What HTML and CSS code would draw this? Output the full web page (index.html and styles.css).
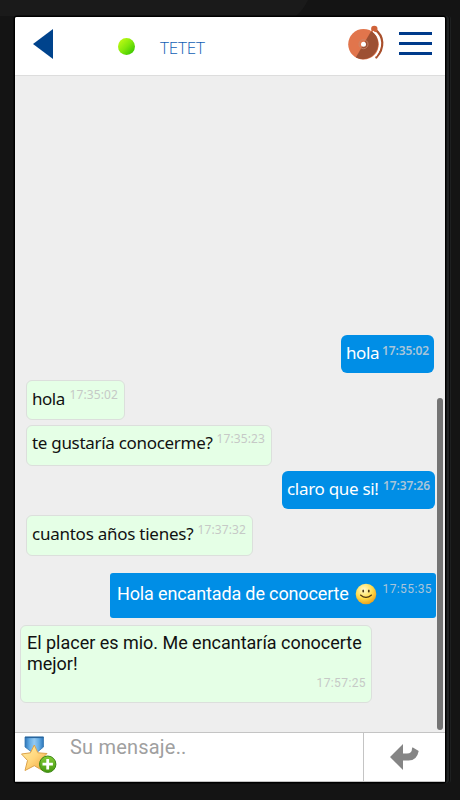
FILE: index.html
```
<!DOCTYPE html>
<html lang="es">
<head>
<meta charset="utf-8">
<title>TETET</title>
<link rel="stylesheet" href="styles.css">
</head>
<body>
<div class="phone">
  <svg class="glare" width="308" height="16" viewBox="0 0 308 16"><path d="M0 0H308Q304 9 296 16H0Z" fill="#1a1a1a"/></svg>
  <main class="screen">
    <header class="topbar">
      <svg class="back" width="20" height="30" viewBox="0 0 20 30"><path d="M0 15 20 0V30Z" fill="#00438c"/></svg>
      <span class="status"></span>
      <h1 class="name">TETET</h1>
      <svg class="bell" width="36" height="36" viewBox="0 0 36 36">
        <path d="M27 4.5C36 11 37 23 28.3 32.5" fill="none" stroke="#a94f2b" stroke-width="2.2" stroke-linecap="round"/>
        <circle cx="26.3" cy="4" r="3.2" fill="#cf6239"/>
        <circle cx="15.5" cy="19.2" r="15.3" fill="#e1754c"/>
        <path d="M23.2 6A15.3 15.3 0 0 1 7.8 32.4Z" fill="#9d5033"/>
        <path d="M25 6.2C33.2 12 33.7 23 27.7 31" fill="none" stroke="#fff" stroke-width="1.3"/>
        <circle cx="15.5" cy="19.2" r="4.5" fill="none" stroke="#c9896e" stroke-width=".8"/>
        <circle cx="15.5" cy="19.2" r="2.5" fill="#fff"/>
      </svg>
      <div class="menu"><i></i><i></i><i></i></div>
    </header>
    <section class="chat">
      <div class="msg out m1"><span class="text">hola</span><time>17:35:02</time></div>
      <div class="msg in m2"><span class="text">hola</span><time>17:35:02</time></div>
      <div class="msg in m3"><span class="text">te gustaría conocerme?</span><time>17:35:23</time></div>
      <div class="msg out m4"><span class="text">claro que si!</span><time>17:37:26</time></div>
      <div class="msg in m5"><span class="text">cuantos años tienes?</span><time>17:37:32</time></div>
      <div class="msg out mobile m6"><span class="text">Hola encantada de conocerte</span>
        <svg class="smile" width="22" height="22" viewBox="0 0 22 22">
          <defs><radialGradient id="face" cx=".4" cy=".3" r=".75"><stop offset="0" stop-color="#fffbd0"/><stop offset=".55" stop-color="#ffdc4b"/><stop offset="1" stop-color="#e99a16"/></radialGradient></defs>
          <circle cx="11" cy="11" r="10.3" fill="url(#face)"/>
          <ellipse cx="8.2" cy="8" rx=".9" ry="1.5" fill="#4c3512"/><ellipse cx="13.8" cy="8" rx=".9" ry="1.5" fill="#4c3512"/>
          <path d="M5.5 12Q11 16.8 16.5 12" fill="none" stroke="#4c3512" stroke-width="1.1" stroke-linecap="round"/>
        </svg>
        <time>17:55:35</time></div>
      <div class="msg in mobile m7"><span class="text">El placer es mio. Me encantaría conocerte<br>mejor!</span><time>17:57:25</time></div>
      <div class="scrollbar"></div>
    </section>
    <footer class="composer">
      <svg class="medal" width="38" height="40" viewBox="0 0 38 40">
        <defs>
          <linearGradient id="ribbon"><stop offset="0" stop-color="#2c75b9"/><stop offset=".25" stop-color="#65ade5"/><stop offset=".5" stop-color="#94c9f1"/><stop offset=".75" stop-color="#65ade5"/><stop offset="1" stop-color="#2c75b9"/></linearGradient>
          <linearGradient id="star" x2="1" y2="1"><stop offset="0" stop-color="#fff0a8"/><stop offset=".5" stop-color="#ffd67c"/><stop offset="1" stop-color="#eea33c"/></linearGradient>
          <linearGradient id="plus" x2="0" y2="1"><stop offset="0" stop-color="#84cd37"/><stop offset="1" stop-color="#45980d"/></linearGradient>
        </defs>
        <path d="M5 2H23.5V12L18 16.5H11L5 12Z" fill="url(#ribbon)" stroke="#3979b0" stroke-width=".8"/>
        <path d="M5 2.4H23.5" stroke="#28659e" stroke-width="1.4"/>
        <path d="M14.3 10 17.9 17.8 27 18.5 20.6 25 22.5 35.5 14.3 30.7 5 35.5 7.5 25.5 1.5 19 10.4 17.8Z" fill="url(#star)" stroke="#dda34b" stroke-width="1" stroke-linejoin="round"/>
        <circle cx="27.7" cy="29.2" r="8.2" fill="url(#plus)" stroke="#3b8614" stroke-width="1"/>
        <path d="M27.7 24V34.4M22.5 29.2H32.9" stroke="#fff" stroke-width="2.8"/>
      </svg>
      <div class="field">Su mensaje..</div>
      <div class="send"><svg width="29" height="26" viewBox="0 0 29 26"><path d="M0 13 13 0V9.5H17Q22 9.5 22 4.5L22.5 3.3 28.7 7Q27 16.5 18.5 16.5H13V26Z" fill="#858585"/></svg></div>
    </footer>
  </main>
</div>
</body>
</html>
```
FILE: styles.css
```
* { box-sizing: border-box; }
body { margin: 0; background: #141414; }
.phone {
  position: relative;
  width: 460px;
  height: 800px;
  padding: 17px 15px 18px;
  background: #141414;
  overflow: hidden;
}
.glare { position: absolute; top: 0; left: 0; }
.screen {
  position: relative;
  display: flex;
  flex-direction: column;
  width: 430px;
  height: 765px;
  background: #eee;
  border-radius: 2px;
  box-shadow: 0 0 0 1.5px #000, 3px 0 0 1px #202223, 4px 0 0 1px #0a0a0a, 5px 0 0 1px #1e2021;
}
.topbar {
  display: flex;
  align-items: flex-start;
  height: 59px;
  background: #fff;
  border-bottom: 1px solid #ddd;
  border-radius: 2px 2px 0 0;
}
.back { margin: 12px 0 0 18px; }
.status {
  width: 17px;
  height: 17px;
  margin: 21px 0 0 65px;
  border-radius: 50%;
  background: linear-gradient(135deg, #c0fa15 10%, #83e80b 50%, #38c600 90%);
}
.name {
  width: 60px;
  margin: 20px 0 0 25px;
  font: 300 17px/22px "Open Sans", sans-serif;
  letter-spacing: -.15px;
  color: #1160b5;
}
.bell { margin: 8px 0 0 128px; }
.menu {
  display: flex;
  flex-direction: column;
  gap: 7.5px;
  width: 33px;
  margin: 15px 0 0 15px;
}
.menu i { height: 2.5px; background: #003b8b; }
.chat {
  position: relative;
  display: flex;
  flex-direction: column;
  height: 656px;
  padding: 259px 9px 0 5px;
}
.msg {
  display: flex;
  flex: none;
  align-items: flex-start;
  align-self: flex-start;
  border-radius: 6px;
  padding: 7px 5px 0;
  font: 17px/22px "Noto Sans", sans-serif;
  letter-spacing: -.3px;
  white-space: nowrap;
}
.msg time {
  margin-left: auto;
  font: 12px/16px "Noto Sans", sans-serif;
  letter-spacing: .1px;
}
.in { color: #111; background: #e5ffe6; border: 1px solid #dcdfdc; }
.in time { color: #c6c9c6; }
.in:not(.mobile) time { margin-top: -1px; margin-right: 1px; }
.out { align-self: flex-end; color: #fff; background: #008ee6; }
.out time { color: #a9c5d9; }
.m1 { width: 93px; height: 38px; margin-right: 2px; letter-spacing: -.4px; }
.m1 time { margin-top: 1px; }
.m2 { width: 99px; height: 40px; margin: 7px 0 0 6px; letter-spacing: -.5px; }
.m3 { width: 246px; height: 41px; margin: 5px 0 0 6px; padding-top: 6px; }
.m4 { width: 153px; height: 38px; margin: 5px 1px 0 0; letter-spacing: -.3px; }
.m5 { width: 227px; height: 41px; margin: 6px 0 0 6px; letter-spacing: -.25px; }
.m1 time, .m4 time { font-weight: 600; letter-spacing: -.1px; }
.mobile, .mobile time { font-family: Roboto, sans-serif; }
.m6 {
  width: 326px;
  height: 45px;
  margin: 17px 0 0;
  padding: 10px 4px 0 7px;
  border-radius: 3px;
  font-size: 18px;
  letter-spacing: -.14px;
}
.m6 .smile { margin-left: 6px; }
.m6 time, .m7 time { font-size: 12px; letter-spacing: .4px; }
.m6 time { margin-top: -2px; }
.m7 {
  flex-direction: column;
  width: 352px;
  height: 78px;
  margin-top: 7px;
  padding: 6px 5px 0 6px;
  font-size: 18px;
  line-height: 21px;
  letter-spacing: -.02px;
}
.m7 time { margin-top: 1px; }
.scrollbar {
  position: absolute;
  top: 322px;
  right: 2px;
  width: 6px;
  height: 332px;
  border-radius: 3px;
  background: #747474;
}
.composer {
  display: flex;
  height: 50px;
  background: #fff;
  border-top: 1px solid #c4c4c4;
  border-bottom: 1px solid #c4c4c4;
}
.medal { margin: 2px 0 0 5px; }
.field {
  flex: 1;
  padding: 2px 0 0 12px;
  font: 20px/24px Roboto, sans-serif;
  letter-spacing: .2px;
  color: #a0a0a0;
}
.send {
  display: flex;
  align-items: center;
  justify-content: center;
  width: 82px;
  border-left: 1px solid #c4c4c4;
}
```
